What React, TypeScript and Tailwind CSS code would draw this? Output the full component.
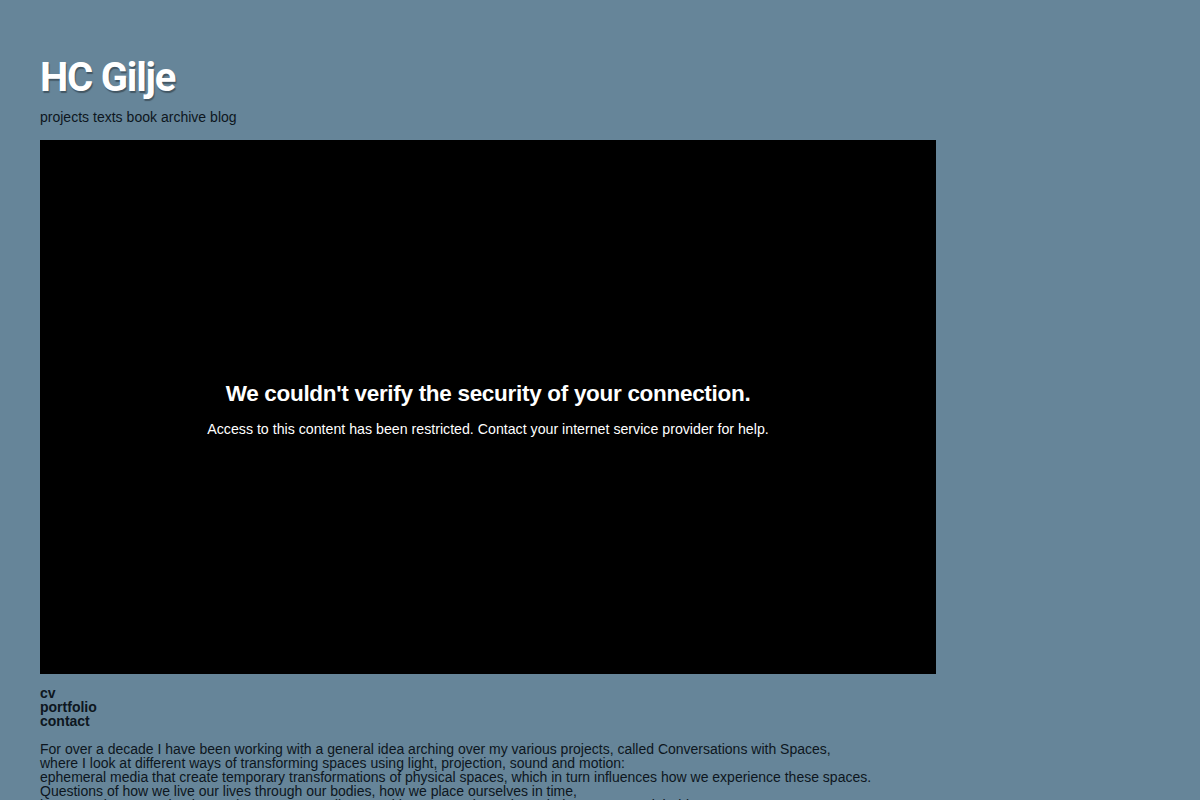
import React from "react";

export default function App() {
  const intro = [
    "For over a decade I have been working with a general idea arching over my various projects, called Conversations with Spaces,",
    "where I look at different ways of transforming spaces using light, projection, sound and motion:",
    "ephemeral media that create temporary transformations of physical spaces, which in turn influences how we experience these spaces.",
    "Questions of how we live our lives through our bodies, how we place ourselves in time,",
    "how we relate to each other and to our surroundings, and how we navigate through the spaces we inhabit.",
  ];

  return (
    <div className="h-[800px] overflow-hidden bg-[#668599] px-10 pt-[52px] font-['Liberation_Sans',Arial,sans-serif] text-[#0d1620]">
      <h1 className="font-['Roboto',sans-serif] font-bold text-[40px] leading-[52px] tracking-[-1.2px] text-white [text-shadow:1px_2px_1px_rgba(0,0,0,0.35)]">
        HC Gilje
      </h1>
      <nav className="flex gap-[4px] text-[14px] leading-[18px] mt-[4px]">
        <a>projects</a>
        <a>texts</a>
        <a>book</a>
        <a>archive</a>
        <a>blog</a>
      </nav>

      <div className="mt-[14px] w-[896px] h-[534px] bg-black flex flex-col items-center justify-center text-white">
        <h2 className="font-bold text-[22.5px] leading-[28px] tracking-[-0.3px] mt-[4px]">
          We couldn't verify the security of your connection.
        </h2>
        <p className="text-[14.2px] leading-[18px] mt-[12px]">
          Access to this content has been restricted. Contact your internet service provider for help.
        </p>
      </div>

      <ul className="mt-[12px] font-bold text-[14px] leading-[14px]">
        <li>cv</li>
        <li>portfolio</li>
        <li>contact</li>
      </ul>

      <div className="mt-[14px] text-[14px] leading-[14px]">
        {intro.map((line, i) => (
          <p key={i}>{line}</p>
        ))}
      </div>
    </div>
  );
}
